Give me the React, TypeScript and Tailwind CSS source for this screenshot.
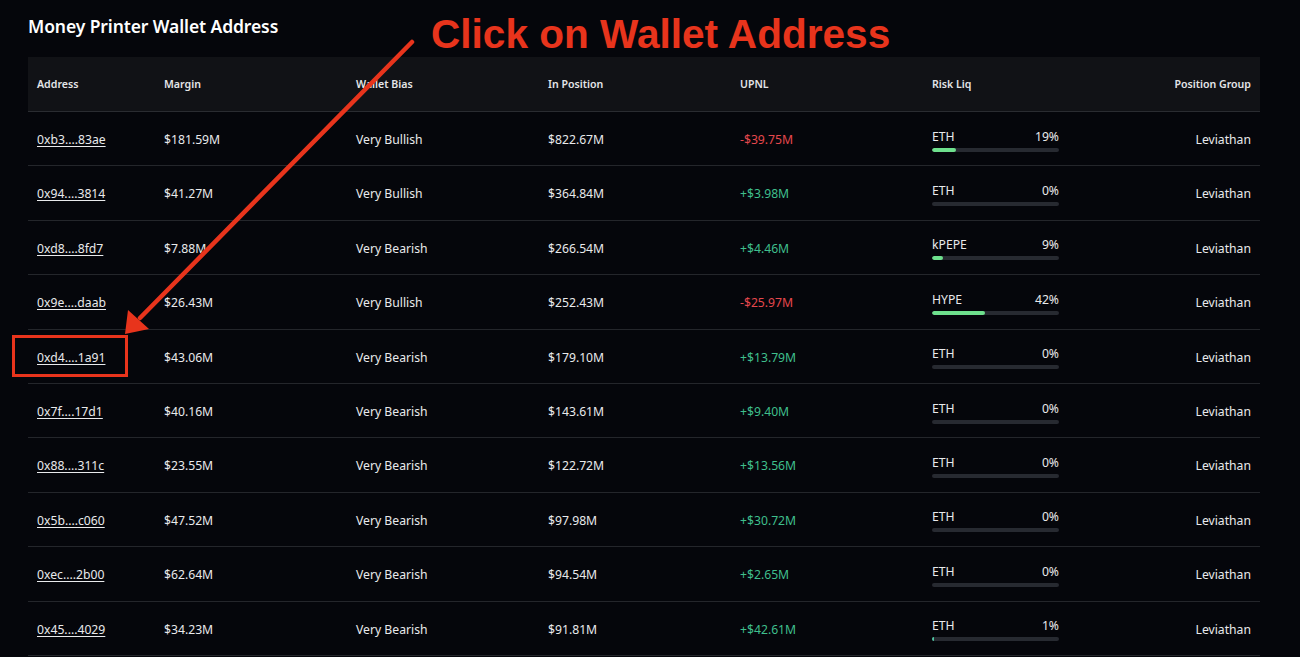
import React from 'react'

interface WalletRow {
  address: string
  margin: string
  bias: string
  inPosition: string
  upnl: string
  asset: string
  risk: number
}

const rows: WalletRow[] = [
  { address: '0xb3....83ae', margin: '$181.59M', bias: 'Very Bullish', inPosition: '$822.67M', upnl: '-$39.75M', asset: 'ETH', risk: 19 },
  { address: '0x94....3814', margin: '$41.27M', bias: 'Very Bullish', inPosition: '$364.84M', upnl: '+$3.98M', asset: 'ETH', risk: 0 },
  { address: '0xd8....8fd7', margin: '$7.88M', bias: 'Very Bearish', inPosition: '$266.54M', upnl: '+$4.46M', asset: 'kPEPE', risk: 9 },
  { address: '0x9e....daab', margin: '$26.43M', bias: 'Very Bullish', inPosition: '$252.43M', upnl: '-$25.97M', asset: 'HYPE', risk: 42 },
  { address: '0xd4....1a91', margin: '$43.06M', bias: 'Very Bearish', inPosition: '$179.10M', upnl: '+$13.79M', asset: 'ETH', risk: 0 },
  { address: '0x7f....17d1', margin: '$40.16M', bias: 'Very Bearish', inPosition: '$143.61M', upnl: '+$9.40M', asset: 'ETH', risk: 0 },
  { address: '0x88....311c', margin: '$23.55M', bias: 'Very Bearish', inPosition: '$122.72M', upnl: '+$13.56M', asset: 'ETH', risk: 0 },
  { address: '0x5b....c060', margin: '$47.52M', bias: 'Very Bearish', inPosition: '$97.98M', upnl: '+$30.72M', asset: 'ETH', risk: 0 },
  { address: '0xec....2b00', margin: '$62.64M', bias: 'Very Bearish', inPosition: '$94.54M', upnl: '+$2.65M', asset: 'ETH', risk: 0 },
  { address: '0x45....4029', margin: '$34.23M', bias: 'Very Bearish', inPosition: '$91.81M', upnl: '+$42.61M', asset: 'ETH', risk: 1 },
]

const cols = 'grid grid-cols-[127px_192px_192px_192px_192px_192px_1fr] items-center px-[9px]'

function RiskBar({ asset, risk }: { asset: string; risk: number }) {
  return (
    <div className="flex w-[127px] flex-col">
      <div className="flex items-center justify-between leading-[16px]">
        <span>{asset}</span>
        <span>{risk}%</span>
      </div>
      <div className="mt-[3px] h-[4px] w-full overflow-hidden rounded-full bg-[#272a31]">
        {risk > 0 && (
          <div
            className={risk < 3 ? 'h-full bg-[#4fc3a1]' : 'h-full rounded-full bg-[#6ee08d]'}
            style={{ width: `${Math.max(risk, 1.5)}%` }}
          />
        )}
      </div>
    </div>
  )
}

export default function App() {
  return (
    <div className="relative h-[657px] w-[1300px] overflow-hidden bg-[#05060b] font-['Noto_Sans',sans-serif] text-[#e9eaec]">
      <div className="px-[28px] pt-[13px]">
        <h1 className="h-[44px] text-[17.5px] font-semibold leading-[26px] tracking-[-0.1px] text-white">
          Money Printer Wallet Address
        </h1>

        <div className="w-[1232px]">
          {/* header */}
          <div className={`${cols} h-[55px] border-b border-[#2a2c31] bg-[#111216] pt-[1px] text-[10.6px] font-semibold text-[#e4e5e8]`}>
            <div>Address</div>
            <div>Margin</div>
            <div>Wallet Bias</div>
            <div>In Position</div>
            <div>UPNL</div>
            <div>Risk Liq</div>
            <div className="text-right">Position Group</div>
          </div>

          {rows.map(row => (
            <div key={row.address} className={`${cols} h-[54.4px] border-b border-[#24262b] pt-[3px] text-[12.2px]`}>
              <div>
                <a href="#" className="underline underline-offset-2">{row.address}</a>
              </div>
              <div>{row.margin}</div>
              <div>{row.bias}</div>
              <div>{row.inPosition}</div>
              <div className={row.upnl.startsWith('-') ? 'text-[#e5484d]' : 'text-[#3fbf8c]'}>{row.upnl}</div>
              <div>
                <RiskBar asset={row.asset} risk={row.risk} />
              </div>
              <div className="text-right">Leviathan</div>
            </div>
          ))}
        </div>
      </div>

      {/* annotation overlay */}
      <div className="pointer-events-none absolute left-[431px] top-[12px] font-['Liberation_Sans',Arial,sans-serif] text-[40.6px] font-bold leading-[44px] text-[#e8341c]">
        Click on Wallet Address
      </div>
      <svg className="pointer-events-none absolute left-0 top-0" width="1300" height="657" viewBox="0 0 1300 657">
        <line x1="412" y1="42" x2="140" y2="318" stroke="#e8341c" strokeWidth="4.5" strokeLinecap="round" />
        <polygon points="125,334 128,310 149,329" fill="#e8341c" />
        <rect x="13.5" y="336.5" width="113" height="39" fill="none" stroke="#e8341c" strokeWidth="3" />
      </svg>
    </div>
  )
}
